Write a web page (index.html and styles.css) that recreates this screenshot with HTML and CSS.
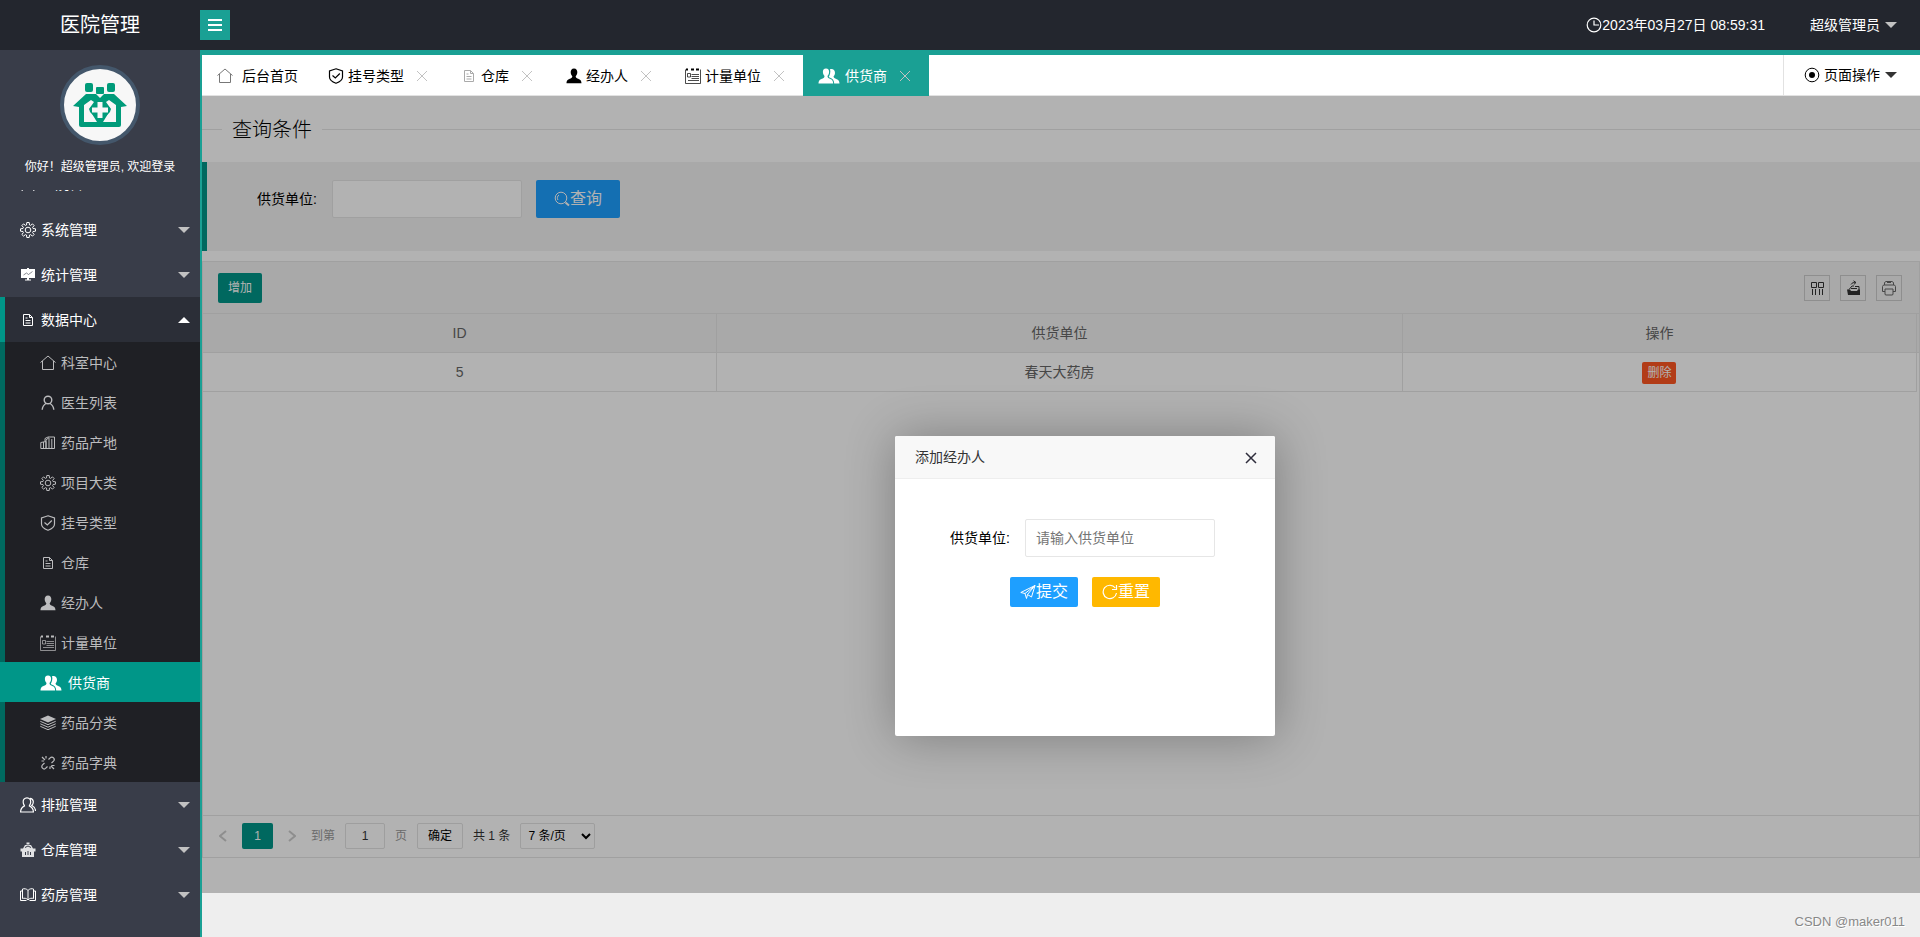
FILE: index.html
```html
<!DOCTYPE html>
<html lang="zh-CN">
<head>
<meta charset="utf-8">
<title>医院管理</title>
<link rel="stylesheet" href="styles.css">
</head>
<body>
<svg class="sprite" aria-hidden="true">
  <symbol id="home" viewBox="0 0 16 16"><path d="M.5 7.500 8 1l7.500 6.500M2.500 6V14.500H13.500V6"/></symbol>
  <symbol id="shield" viewBox="0 0 16 16"><path stroke-width="1.200" d="M8 .8 14.500 3v6c0 3-3 5-6.500 6.300C4.500 14 1.500 12 1.500 9V3zM4.500 7.500 7.300 10l4.500-4.500"/></symbol>
  <symbol id="file" viewBox="0 0 16 16"><path d="M3.500 2.500h6l3 3v8h-9zM9.500 2.500v3h3M5.500 8.500h5M5.500 11h5M5.500 6h2"/></symbol>
  <symbol id="person" viewBox="0 0 16 16"><path class="solid" d="M8 .5C5.700.5 4.500 2.200 4.700 4.500c.1 1.800.9 2.900 1.600 3.700-.1 1.200-.4 1.700-1.700 2.200C2.300 11.200.5 12 .5 15.200h15c0-3.200-1.800-4-4.100-4.800-1.300-.5-1.600-1-1.700-2.200.7-.8 1.500-1.900 1.600-3.700C11.500 2.200 10.300.5 8 .5z"/></symbol>
  <symbol id="card" viewBox="0 0 16 16"><path opacity=".7" d="M.5 1.500V15.500h15V1.500M6.500 6.500h7.500M6.500 8.500h7.500M6.500 10.500h7.500M3 12.500h11M2.500 5.500h3v3.500h-3z"/><path class="solid" d="M1 .5h2v2H1zM6 .5h3v2H6zM11 .5h3v2h-3z"/></symbol>
  <symbol id="people" viewBox="0 0 22 16"><path class="solid" d="M8 .5C5.800.5 4.700 2.200 4.900 4.300c.1 1.700.9 2.900 1.600 3.800 0 1.300-.5 1.800-1.700 2.300C2.200 11.300.6 12 .5 15.500h14.700c0-3.500-1.700-4.200-4-5.100-1.200-.5-1.700-1-1.700-2.300.7-.9 1.500-2.100 1.600-3.800C11.300 2.200 10.200.5 8 .5z"/><path class="solid" d="M12 1.300c2-1 5.100 0 5 3.600 0 1.500-.8 2.500-1.400 3.300 0 1.200.4 1.700 1.500 2.200 2.200.9 4.300 1.400 4.400 5.100h-5.300c-.1-3-1.300-4.700-4.600-5.900-.4-.2-.8-.4-.8-.8 1-1.400 2.100-5 1.200-7.500z"/></symbol>
  <symbol id="gear" viewBox="0 0 16 16"><path d="M6.500 3 6.800.500h2.400l.3 2.500 1 .4 2-1.500 1.600 1.600-1.500 2 .4 1 2.500.3v2.400l-2.500.3-.4 1 1.500 2-1.600 1.600-2-1.500-1 .4-.3 2.500H6.800L6.500 13l-1-.4-2 1.500-1.600-1.600 1.500-2-.4-1L.5 9.200V6.800L3 6.500l.4-1-1.500-2 1.600-1.600 2 1.500z"/><circle cx="8" cy="8" r="2.800"/></symbol>
  <symbol id="board" viewBox="0 0 16 16"><path class="solid" d="M1 2h6V1h2v1h6v9H9v1.500h2V13.500H5v-1h2V11H1z"/><path class="cut" stroke-width=".6" d="m3.500 8 3-2 2 1.500 4-3"/></symbol>
  <symbol id="doctor" viewBox="0 0 16 16"><path stroke-width="1.400" d="M8 1.200a3.700 3.700 0 0 1 0 7.600 3.700 3.700 0 0 1 0-7.600zM6 8.500C3.500 9.800 2.500 11.800 2.200 14.700M10 8.500c2.500 1.300 3.500 3.300 3.800 6.200"/></symbol>
  <symbol id="city" viewBox="0 0 16 16"><path d="M.8 7.500 6 6.500v7H.8zM3.500 7v6.500M5 6V3.500L8 2h6.500v11.500H6M6 13.500V5l3-2.500M9 3v10.500M11.800 4v9.500"/></symbol>
  <symbol id="layers" viewBox="0 0 16 16"><path class="solid" d="M8 .5 16 4 8 7.500 0 4z"/><path d="M.3 6.300 8 9.700l7.700-3.400M.3 8.800 8 12.200 15.700 8.800M.3 11.300 8 14.700l7.700-3.400"/></symbol>
  <symbol id="unlink" viewBox="0 0 16 16"><path stroke-width="1.200" d="m8.500 4.500 1.700-1.700a2.300 2.300 0 0 1 3.300 3.300L11.500 8M7.500 11.500l-1.700 1.700a2.300 2.300 0 0 1-3.300-3.300L4.500 8M6 1v2.500M1.500 6H4M2 2l3 3M10 11.500V14M11.500 10.500H14.500M11 11l3 3"/></symbol>
  <symbol id="group" viewBox="0 0 16 16"><path stroke-width="1.200" d="M7 .8C4.300.8 3 3 3.200 5.200c.1 2 1.300 3.400 1.300 3.700C2.300 10 .6 12 .6 15h12.800c0-3-1.700-5-4.100-6.100 0-.3 1.300-1.700 1.400-3.700C10.800 3 9.700.8 7 .8zM10 1.300c4 .2 4 5 1.800 7.200 2 1 3.700 2.700 3.700 5.500"/></symbol>
  <symbol id="depot" viewBox="0 0 16 16"><path class="solid" opacity=".85" d="M.5 6.500h15v3H.5zM6.500.5h3v2h-3zM5 3h6l2 3.500H3zM2 9.500h12V15H2z"/><path class="cut" d="M5.500 13v-3M8 13V9M10.500 13v-3M5 5.500l3-1.500 3 1.500"/></symbol>
  <symbol id="book" viewBox="0 0 16 16"><path d="M8 3.500C6.500 1.500 4 1.500 2.500 2v9.500C4 11 6.500 11 8 13c1.500-2 4-2 5.500-1.500V2C12 1.500 9.500 1.500 8 3.500zM8 3.500V13M2.500 4H.5v9.500h6M13.500 4h2v9.500h-6"/></symbol>
  <symbol id="clock" viewBox="0 0 16 16"><path d="M8 1.200a6.800 6.800 0 0 1 0 13.600A6.800 6.800 0 0 1 8 1.200zM8 3.500V8h5" stroke-width="1.200"/></symbol>
  <symbol id="target" viewBox="0 0 16 16"><circle cx="8" cy="8" r="6.800"/><circle class="solid" cx="8" cy="8" r="3"/></symbol>
  <symbol id="close" viewBox="0 0 12 12"><path d="m1 1 10 10M11 1 1 11"/></symbol>
  <symbol id="search" viewBox="0 0 16 16"><circle cx="7" cy="7" r="5.800"/><path d="M4 9a3.500 3.500 0 0 1 1-5"/><path stroke-width="2" d="m11.500 11.500 3.500 3"/></symbol>
  <symbol id="cols" viewBox="0 0 16 16"><path d="M2.500 2.500h5v5h-5zM9.500 2.500h5v5h-5zM3.500 9v6M6.500 9v6M10.500 9v6M13.500 9v6"/></symbol>
  <symbol id="export" viewBox="0 0 16 16"><path class="solid" d="M2 9.500h3l1 1.500h6l1-1.500h2V15H3z"/><path d="M4 9.500 7 6h2M10 6.500h4V10M6 4.500c1-2 3-2 4.500-2M8.500.8l2.500 1.700L8.800 4.500M6 8.500h6"/></symbol>
  <symbol id="print" viewBox="0 0 16 16"><path d="M3.500 5V2.500l1.500-1h6l1.500 1V5M4 11.500H1.500V6.500l1-1.500h11l1 1.500v5H12M4 9h8v5.500l-1 .5H5l-1-.5zM6 2.500h4"/></symbol>
  <symbol id="plane" viewBox="0 0 16 16"><path d="M.8 8.500 15 1.500 11.500 13 7.500 10.500 15 1.500 5 9.500zM5 9.500 6.500 14.500 7.500 10.500"/></symbol>
  <symbol id="refresh" viewBox="0 0 16 16"><path stroke-width="1.200" d="M14.500 9A6.700 6.700 0 1 1 13.300 4M14.500 1v4.500H10"/></symbol>
  <symbol id="prev" viewBox="0 0 8 12"><path d="M7 1 1 6l6 5"/></symbol>
  <symbol id="next" viewBox="0 0 8 12"><path d="m1 1 6 5-6 5"/></symbol>
</svg>

<header class="header">
  <div class="brand">医院管理</div>
  <button class="toggle" aria-label="折叠菜单"><span></span><span></span><span></span></button>
  <div class="clock"><svg class="icon"><use href="#clock"/></svg><time>2023年03月27日 08:59:31</time></div>
  <button class="account">超级管理员<i class="caret"></i></button>
</header>

<div class="shell">
  <aside class="side">
    <div class="profile">
      <svg class="avatar" viewBox="0 0 72 72" role="img" aria-label="头像">
        <g fill="#009b7a">
          <rect x="21" y="14" width="8" height="9" rx="2"/>
          <rect x="32" y="18" width="8" height="7" rx="1"/>
          <rect x="43" y="14" width="8" height="9" rx="2"/>
          <path d="M9 37 22 25h10l4 4 4-4h10l13 12-6 1v18q0 2-2 2H17q-2 0-2-2V38z"/>
        </g>
        <path d="M20 36l7-5 3 2-5 7 8 13H20zM52 36l-7-5-3 2 5 7-8 13h13z" fill="#f7f7f7"/>
        <path d="M36 29 46 39q1 2 0 4L36 53 26 43q-1-2 0-4z" fill="#009b7a"/>
        <path d="M33.500 33h5v5.500H44v5h-5.500V49h-5v-5.500H28v-5h5.500z" fill="#f7f7f7"/>
      </svg>
      <p>你好！超级管理员, 欢迎登录</p>
    </div>
    <div class="scroller">
      <nav class="menu">
        <button class="group passed"><svg class="icon"><use href="#doctor"/></svg>医院管理</button>
        <button class="group"><svg class="icon"><use href="#gear"/></svg>系统管理<i class="caret"></i></button>
        <button class="group"><svg class="icon"><use href="#board"/></svg>统计管理<i class="caret"></i></button>
        <button class="group open"><svg class="icon"><use href="#file"/></svg>数据中心<i class="caret up"></i></button>
        <div class="children">
          <a href="#"><svg class="icon"><use href="#home"/></svg>科室中心</a>
          <a href="#"><svg class="icon"><use href="#doctor"/></svg>医生列表</a>
          <a href="#"><svg class="icon"><use href="#city"/></svg>药品产地</a>
          <a href="#"><svg class="icon"><use href="#gear"/></svg>项目大类</a>
          <a href="#"><svg class="icon"><use href="#shield"/></svg>挂号类型</a>
          <a href="#"><svg class="icon"><use href="#file"/></svg>仓库</a>
          <a href="#"><svg class="icon"><use href="#person"/></svg>经办人</a>
          <a href="#"><svg class="icon"><use href="#card"/></svg>计量单位</a>
          <a href="#" class="current"><svg class="icon wide"><use href="#people"/></svg>供货商</a>
          <a href="#"><svg class="icon"><use href="#layers"/></svg>药品分类</a>
          <a href="#"><svg class="icon"><use href="#unlink"/></svg>药品字典</a>
        </div>
        <button class="group"><svg class="icon"><use href="#group"/></svg>排班管理<i class="caret"></i></button>
        <button class="group"><svg class="icon"><use href="#depot"/></svg>仓库管理<i class="caret"></i></button>
        <button class="group"><svg class="icon"><use href="#book"/></svg>药房管理<i class="caret"></i></button>
      </nav>
    </div>
  </aside>

  <div class="body">
    <div class="tabs">
      <div class="tab first"><svg class="icon"><use href="#home"/></svg>后台首页</div>
      <div class="tab"><svg class="icon"><use href="#shield"/></svg>挂号类型<button class="x" aria-label="关闭"><svg><use href="#close"/></svg></button></div>
      <div class="tab pale"><svg class="icon"><use href="#file"/></svg>仓库<button class="x" aria-label="关闭"><svg><use href="#close"/></svg></button></div>
      <div class="tab"><svg class="icon"><use href="#person"/></svg>经办人<button class="x" aria-label="关闭"><svg><use href="#close"/></svg></button></div>
      <div class="tab"><svg class="icon"><use href="#card"/></svg>计量单位<button class="x" aria-label="关闭"><svg><use href="#close"/></svg></button></div>
      <div class="tab active"><svg class="icon wide"><use href="#people"/></svg>供货商<button class="x" aria-label="关闭"><svg><use href="#close"/></svg></button></div>
      <button class="pageops"><svg class="icon"><use href="#target"/></svg>页面操作<i class="caret dark"></i></button>
    </div>

    <main class="frame">
      <fieldset class="section"><legend>查询条件</legend></fieldset>
      <form class="query">
        <label for="unit">供货单位:</label>
        <input class="field" id="unit" type="text">
        <button class="btn blue" type="button"><svg class="icon"><use href="#search"/></svg>查询</button>
      </form>

      <section class="grid">
        <div class="toolbar">
          <button class="add">增加</button>
          <div class="tools">
            <button aria-label="筛选列"><svg class="icon"><use href="#cols"/></svg></button>
            <button aria-label="导出"><svg class="icon"><use href="#export"/></svg></button>
            <button aria-label="打印"><svg class="icon light"><use href="#print"/></svg></button>
          </div>
        </div>
        <div class="tablebox">
          <table>
            <colgroup><col class="c3"><col class="c4"><col class="c3"></colgroup>
            <thead><tr><th>ID</th><th>供货单位</th><th>操作</th></tr></thead>
            <tbody><tr><td>5</td><td>春天大药房</td><td><button class="del">删除</button></td></tr></tbody>
          </table>
        </div>
        <div class="pager">
          <button class="arrow" aria-label="上一页"><svg><use href="#prev"/></svg></button>
          <button class="num">1</button>
          <button class="arrow" aria-label="下一页"><svg><use href="#next"/></svg></button>
          <label for="goto">到第</label>
          <input id="goto" type="text" value="1">
          <span>页</span>
          <button class="ok">确定</button>
          <span class="total">共 1 条</span>
          <select aria-label="每页条数"><option>7 条/页</option></select>
        </div>
      </section>

      <div class="shade"></div>
      <div class="dialog" role="dialog" aria-label="添加经办人">
        <div class="dialog-title">添加经办人<button aria-label="关闭"><svg><use href="#close"/></svg></button></div>
        <form class="dialog-form">
          <div class="row">
            <label for="name">供货单位:</label>
            <input class="field" id="name" type="text" placeholder="请输入供货单位">
          </div>
          <div class="actions">
            <button class="btn small blue" type="button"><svg class="icon"><use href="#plane"/></svg>提交</button>
            <button class="btn small amber" type="reset"><svg class="icon"><use href="#refresh"/></svg>重置</button>
          </div>
        </form>
      </div>
    </main>
    <footer class="foot">CSDN @maker011</footer>
  </div>
</div>
</body>
</html>
```

FILE: styles.css
```css
* { box-sizing: border-box; }
body {
  margin: 0;
  height: 100vh;
  display: flex;
  flex-direction: column;
  overflow: hidden;
  color: #000;
  font: 14px/24px "Liberation Sans", "Noto Sans CJK SC", sans-serif;
}
button, input, select { font: inherit; color: inherit; margin: 0; padding: 0; }
button { background: none; border: 0; cursor: pointer; }
a { color: inherit; text-decoration: none; }
p { margin: 0; }
svg { fill: none; stroke: currentColor; stroke-width: 1; }
.sprite { display: none; }
.solid { fill: currentColor; stroke: none; }
.cut { stroke: #393d49; }
.icon { width: 16px; height: 16px; flex: none; }
.icon.wide { width: 22px; margin-right: 1px; }
.caret {
  width: 12px;
  border: solid transparent;
  border-width: 6px 6px 0;
  border-top-color: #c2c2c2;
}
.caret.up { border-width: 0 6px 6px; border-bottom-color: #fff; }
.caret.dark { border-top-color: #333; }

.header {
  height: 50px;
  flex: none;
  display: flex;
  align-items: center;
  background: #23262e;
  color: #fff;
}
.brand { width: 200px; text-align: center; font-size: 20px; }
.toggle {
  width: 30px;
  height: 30px;
  padding: 9px 8px;
  display: flex;
  flex-direction: column;
  justify-content: space-between;
  background: #1aa094;
}
.toggle span { height: 2px; background: #fff; }
.clock { margin-left: auto; display: flex; align-items: center; }
.account { display: flex; align-items: center; gap: 5px; margin: 0 23px 0 45px; }

.shell { flex: 1; min-height: 0; display: flex; }
.side {
  width: 200px;
  flex: none;
  display: flex;
  flex-direction: column;
  background: #393d49;
  color: #fff;
}
.profile {
  height: 140px;
  flex: none;
  padding-top: 15px;
  text-align: center;
  font-size: 12px;
}
.avatar {
  display: block;
  width: 80px;
  height: 80px;
  margin: 0 auto 10px;
  border: 4px solid #44576b;
  border-radius: 50%;
  background: #f7f7f7;
  stroke: none;
}
.scroller { flex: 1; overflow: hidden; }
.menu { margin-top: -28px; }
.group {
  width: 100%;
  height: 45px;
  padding: 0 10px 0 20px;
  display: flex;
  align-items: center;
  gap: 5px;
}
.group.passed { padding-bottom: 2px; }
.group .caret { margin-left: auto; }
.group.open { background: linear-gradient(90deg, #009688 5px, #2b2e37 5px); }
.children { background: linear-gradient(90deg, #00695f 5px, #1f2025 5px); color: #bcbcbe; }
.children a { height: 40px; padding: 1px 0 0 40px; display: flex; align-items: center; gap: 5px; }
.children .current { background: #009688; color: #fff; }

.body {
  flex: 1;
  min-width: 0;
  display: flex;
  flex-direction: column;
  border-top: 5px solid #1aa094;
  border-left: 2px solid #1aa094;
}
.tabs { height: 41px; flex: none; display: flex; border-bottom: 1px solid #e2e2e2; background: #fff; }
.tab { height: 41px; padding: 0 15px; display: flex; align-items: center; gap: 4px; }
.tab.first { gap: 9px; }
.tab.first .icon { color: #777; }
.tab.pale .icon { color: #aaa; }
.tab.active { background: #1aa094; color: #fff; }
.x {
  width: 18px;
  height: 18px;
  margin-left: 5px;
  display: grid;
  place-items: center;
  color: #c2c2c2;
}
.x svg { width: 12px; height: 12px; }
.pageops {
  margin-left: auto;
  padding: 0 23px 0 20px;
  display: flex;
  align-items: center;
  gap: 4px;
  border-left: 1px solid #e2e2e2;
}
.pageops .caret { margin-left: 1px; }

.frame {
  flex: 1;
  position: relative;
  display: flex;
  flex-direction: column;
  padding: 18px 0 35px;
  background: #fff;
}
.section { margin: 0 0 18px; padding: 0; border: 0; border-top: 1px solid #e6e6e6; }
.section legend { height: 30px; margin-left: 20px; padding: 0 10px; font-size: 20px; line-height: 32px; font-weight: 300; }
.query {
  display: flex;
  align-items: center;
  padding: 18px 15px 33px;
  border-left: 5px solid #009688;
  background: #f2f2f2;
}
.query label, .row label { width: 110px; padding-right: 15px; text-align: right; }
.field {
  width: 190px;
  height: 38px;
  padding: 0 10px;
  border: 1px solid #e6e6e6;
  border-radius: 2px;
  background: #fff;
}
.field::placeholder { color: #757575; }
.btn {
  height: 38px;
  padding: 0 18px;
  display: flex;
  align-items: center;
  border-radius: 2px;
  color: #fff;
  font-size: 16px;
}
.btn.small { height: 30px; padding: 0 10px; }
.blue { background: #1e9fff; }
.amber { background: #ffb800; }
.query .btn { margin-left: 14px; }

.grid {
  flex: 1;
  margin-top: 10px;
  display: flex;
  flex-direction: column;
  border: 1px solid #e6e6e6;
  color: #666;
}
.toolbar {
  height: 52px;
  display: flex;
  align-items: center;
  justify-content: space-between;
  padding: 0 17px 0 15px;
  border-bottom: 1px solid #e6e6e6;
  background: #f2f2f2;
}
.add { height: 30px; padding: 0 10px; border-radius: 2px; background: #009688; color: #fff; font-size: 12px; }
.tools { display: flex; gap: 10px; }
.tools button {
  width: 26px;
  height: 26px;
  display: grid;
  place-items: center;
  border: 1px solid #ccc;
  color: #333;
}
.tools .light { color: #666; }
.tablebox { flex: 1; background: linear-gradient(#f2f2f2 38px, #e6e6e6 38px, #e6e6e6 39px, #fff 39px); }
table { width: calc(100% - 2px); table-layout: fixed; border-collapse: separate; border-spacing: 0; }
.c3 { width: 30%; }
.c4 { width: 40%; }
th, td {
  height: 39px;
  padding: 0;
  border: solid #e6e6e6;
  border-width: 0 1px 1px 0;
  text-align: center;
  font-weight: 400;
}
.del {
  height: 22px;
  padding: 0 5px;
  border-radius: 2px;
  background: #ff5722;
  color: #fff;
  font-size: 12px;
  line-height: 22px;
}
.pager {
  height: 42px;
  padding: 7px 10px 8px;
  display: flex;
  align-items: center;
  gap: 10px;
  border-top: 1px solid #e6e6e6;
  color: #999;
  font-size: 12px;
}
.arrow { width: 19px; height: 26px; display: grid; place-items: center; color: #ccc; }
.arrow svg { width: 8px; height: 12px; stroke-width: 2; }
.pager .num { width: 31px; height: 26px; border-radius: 2px; background: #009688; color: #fff; }
.pager .num + .arrow { width: 18px; }
.pager input, .ok, .pager select {
  height: 26px;
  border: 1px solid #e2e2e2;
  border-radius: 2px;
  background: #fff;
  color: #333;
}
.pager input { width: 40px; text-align: center; }
.pager .ok { width: 46px; color: #000; }
.pager .total { color: #333; }
.pager select { width: 75px; padding-left: 3px; color: #000; }

.shade { position: absolute; inset: 0; background: rgba(0, 0, 0, .3); }
.dialog {
  position: absolute;
  top: 340px;
  left: calc(50% - 166px);
  width: 380px;
  height: 300px;
  border-radius: 2px;
  background: #fff;
  box-shadow: 1px 1px 50px rgba(0, 0, 0, .3);
}
.dialog-title {
  height: 43px;
  padding: 0 18px 0 20px;
  display: flex;
  align-items: center;
  justify-content: space-between;
  border-bottom: 1px solid #eee;
  border-radius: 2px 2px 0 0;
  background: #f8f8f8;
  color: #333;
}
.dialog-title button { height: 14px; padding-top: 2px; display: grid; color: #2e2d3c; }
.dialog-title svg { width: 12px; height: 12px; stroke-width: 1.5; }
.dialog-form { padding: 40px 20px 0; }
.row { display: flex; align-items: center; }
.actions { display: flex; justify-content: center; gap: 14px; margin-top: 20px; }

.foot {
  height: 44px;
  flex: none;
  padding: 17px 15px 0 0;
  background: #eee;
  color: #888;
  font-size: 13px;
  text-align: right;
  text-shadow: 1px 1px 0 #fff;
}
```
